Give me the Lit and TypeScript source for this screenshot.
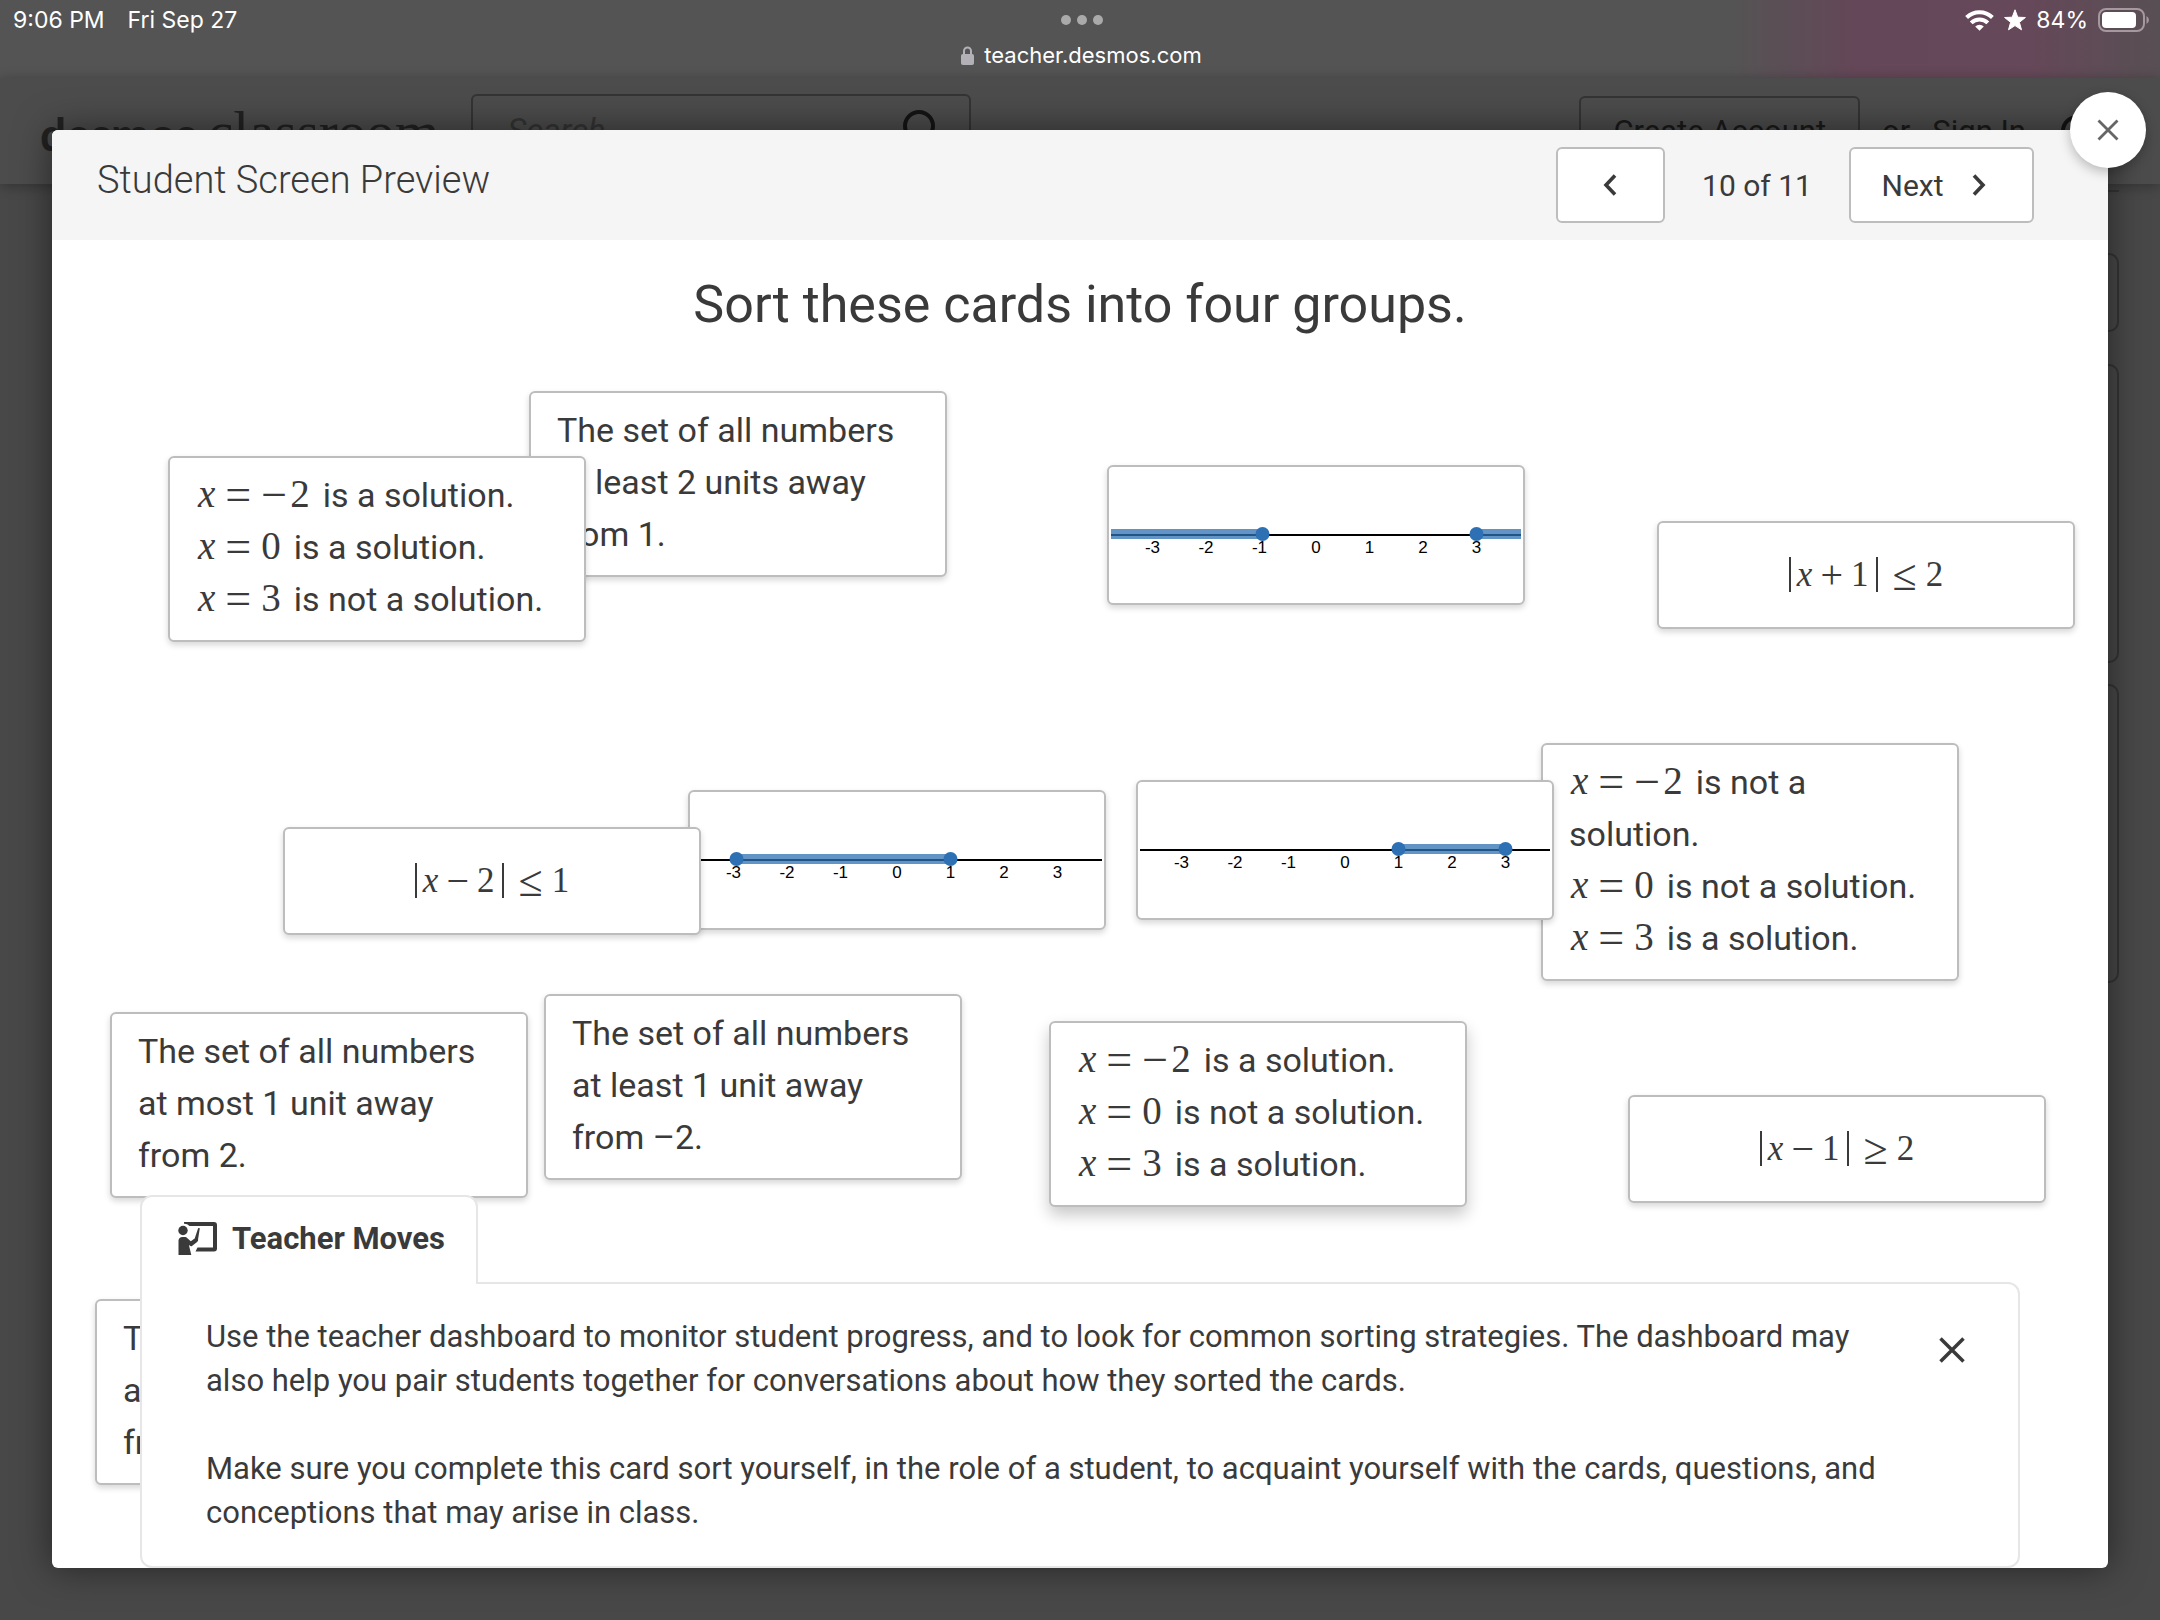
import { LitElement, html, svg, css, nothing, TemplateResult } from "lit";
import { customElement, property } from "lit/decorators.js";
import { classMap } from "lit/directives/class-map.js";

interface SortCard {
  x: number;
  y: number;
  body: TemplateResult;
  kind?: "text" | "formula" | "line";
  lifted?: boolean;
}

interface Span {
  from: number;
  to: number;
}

/** A number line from -3 to 3 with shaded spans and closed end points. */
@customElement("number-line")
export class NumberLine extends LitElement {
  @property({ attribute: false }) spans: Span[] = [];

  static styles = css`
    :host {
      display: block;
    }
    svg {
      display: block;
      width: 100%;
    }
    .axis {
      stroke: #000;
      stroke-width: 2;
    }
    .band {
      fill: #2d70b3;
      fill-opacity: 0.75;
    }
    .point {
      fill: #2d70b3;
    }
    .tick {
      font: 17px "Liberation Sans", Arial, sans-serif;
      fill: #000;
      text-anchor: middle;
    }
  `;

  private place(n: number): number {
    return Math.max(0, Math.min(410, 205 + n * 53.5));
  }

  render() {
    const ticks = [-3, -2, -1, 0, 1, 2, 3];
    const ends = this.spans
      .flatMap((s) => [s.from, s.to])
      .filter((n) => Math.abs(n) < 4);
    return html`<svg viewBox="0 0 410 132" role="img" aria-label="Number line">
      <line class="axis" x1="0" x2="410" y1="66" y2="66"></line>
      ${ticks.map(
        (n) =>
          svg`<text class="tick" x=${this.place(n) - (n < 0 ? 3 : 0)} y="84">${n}</text>`
      )}
      ${this.spans.map(
        (s) =>
          svg`<rect class="band" x=${this.place(s.from)} y="60" width=${
            this.place(s.to) - this.place(s.from)
          } height="10"></rect>`
      )}
      ${ends.map(
        (n) => svg`<circle class="point" cx=${this.place(n)} cy="65" r="7"></circle>`
      )}
    </svg>`;
  }
}

const equation = (value: string, rest: string) => html`<p class="row">
  <span class="math"
    ><i>x</i><span class="rel">=</span>${value.startsWith("−")
      ? html`<span class="neg">−</span>`
      : nothing}${value.replace("−", "")}</span
  >${rest}
</p>`;

const inequality = (op: string, n: string, rel: string, bound: string) =>
  html`<span class="math small"
    ><span class="abs"><i>x</i><span class="bin">${op}</span>${n}</span
    ><span class="cmp">${rel}</span>${bound}</span
  >`;

const line = (spans: Span[]) => html`<number-line .spans=${spans}></number-line>`;

/* Card positions are free coordinates on the sorting canvas. */
const CARDS: SortCard[] = [
  { x: 477, y: 151, body: html`The set of all numbers at least 2 units away from 1.` },
  {
    x: 116,
    y: 216,
    body: html`${equation("−2", "is a solution.")}${equation("0", "is a solution.")}${equation("3", "is not a solution.")}`,
  },
  { x: 1055, y: 225, kind: "line", body: line([{ from: -9, to: -1 }, { from: 3, to: 9 }]) },
  { x: 1605, y: 281, kind: "formula", body: inequality("+", "1", "≤", "2") },
  { x: 636, y: 550, kind: "line", body: line([{ from: -3, to: 1 }]) },
  { x: 231, y: 587, kind: "formula", body: inequality("−", "2", "≤", "1") },
  {
    x: 1489,
    y: 503,
    body: html`${equation("−2", "is not a solution.")}${equation("0", "is not a solution.")}${equation("3", "is a solution.")}`,
  },
  { x: 1084, y: 540, kind: "line", body: line([{ from: 1, to: 3 }]) },
  { x: 58, y: 772, body: html`The set of all numbers at most 1 unit away from 2.` },
  { x: 492, y: 754, body: html`The set of all numbers at least 1 unit away from –2.` },
  {
    x: 997,
    y: 781,
    lifted: true,
    body: html`${equation("−2", "is a solution.")}${equation("0", "is not a solution.")}${equation("3", "is a solution.")}`,
  },
  { x: 1576, y: 855, kind: "formula", body: inequality("−", "1", "≥", "2") },
  { x: 43, y: 1059, body: html`The set of all numbers at most 2 units away from –1.` },
];

@customElement("app-root")
export class AppRoot extends LitElement {
  static styles = css`
    :host {
      display: block;
      font-family: Roboto, "Liberation Sans", sans-serif;
      color: #3a3a3a;
    }
    * {
      box-sizing: border-box;
    }
    p,
    h1,
    h2 {
      margin: 0;
      font-weight: 400;
    }
    button {
      font: inherit;
      color: inherit;
      cursor: pointer;
    }
    svg {
      display: block;
      flex: none;
    }
    .screen {
      display: flex;
      flex-direction: column;
      min-height: 100vh;
      background: #484848;
    }

    /* Browser chrome */
    .chrome {
      height: 78px;
      padding: 0 10px 0 13px;
      font: 23px/40px Inter, "Liberation Sans", sans-serif;
      color: #fff;
      background: linear-gradient(
          90deg,
          transparent 80%,
          #644758 86%,
          #654859 94%,
          #5a4e54 99%,
          #574f53
        ),
        #545454;
    }
    .status {
      display: grid;
      grid-template-columns: 1fr auto 1fr;
      align-items: center;
      height: 40px;
    }
    .when {
      display: flex;
      gap: 23px;
    }
    .power {
      display: flex;
      justify-content: flex-end;
      align-items: center;
      gap: 10px;
    }
    .url {
      display: flex;
      justify-content: center;
      align-items: center;
      gap: 10px;
      font-size: 22px;
      line-height: 30px;
    }

    /* Page and dialog share one cell so the dialog lies over the page */
    .stack {
      flex: 1;
      display: grid;
    }
    .page,
    .dialog {
      grid-area: 1 / 1;
      min-width: 0;
    }
    .nav {
      display: flex;
      align-items: center;
      height: 106px;
      padding: 0 40px;
      background: #4c4c4c;
      box-shadow: 0 2px 12px rgba(0, 0, 0, 0.3);
      color: #1a1a1a;
    }
    .logo {
      display: flex;
      align-items: baseline;
      gap: 12px;
      color: #222;
      font: 57px/1 "Liberation Serif", serif;
      text-decoration: none;
    }
    .logo b {
      font: 700 46px/1 Lato, sans-serif;
    }
    .search {
      display: flex;
      align-items: center;
      width: 500px;
      height: 74px;
      margin-left: 32px;
      padding: 0 32px 0 34px;
      border: 2px solid #343434;
      border-radius: 6px;
    }
    .search input {
      flex: 1;
      min-width: 0;
      border: 0;
      background: none;
      font: italic 33px/40px Roboto, sans-serif;
      padding: 0;
    }
    .search input::placeholder {
      color: #343434;
      opacity: 1;
    }
    .account {
      display: flex;
      align-items: center;
      gap: 22px;
      margin-left: auto;
      font-size: 31px;
    }
    .account button {
      height: 70px;
      padding: 0 32px;
      border: 2px solid #343434;
      border-radius: 6px;
      background: none;
    }
    .account a {
      color: inherit;
      text-decoration: none;
    }
    .panels {
      display: flex;
      flex-direction: column;
      padding: 6px 41px 0 60px;
    }
    .rule {
      border-bottom: 2px solid #343434;
      height: 2px;
      margin-bottom: 61px;
    }
    .panel {
      border: 2px solid #343434;
      border-radius: 10px;
      height: 299px;
      margin-bottom: 21px;
    }
    .panel.short {
      height: 79px;
      margin-bottom: 32px;
    }

    .dialog {
      position: relative;
      display: flex;
      flex-direction: column;
      margin: 52px;
      border-radius: 6px;
      background: #fff;
      box-shadow: 0 0 36px rgba(0, 0, 0, 0.5);
    }
    .dismiss {
      position: absolute;
      top: -38px;
      right: -38px;
      display: grid;
      place-items: center;
      width: 76px;
      height: 76px;
      border: 0;
      border-radius: 50%;
      background: #fff;
      box-shadow: 0 4px 12px rgba(0, 0, 0, 0.25);
    }
    .bar {
      display: flex;
      align-items: center;
      justify-content: space-between;
      height: 110px;
      padding: 0 74px 0 45px;
      border-radius: 6px 6px 0 0;
      background: #f5f5f5;
    }
    .bar h1 {
      font-size: 38px;
      line-height: 44px;
      font-weight: 300;
      padding-bottom: 10px;
    }
    .pager {
      display: flex;
      align-items: center;
      font-size: 30px;
    }
    .count {
      width: 184px;
      text-align: center;
    }
    .step {
      display: flex;
      align-items: center;
      justify-content: center;
      gap: 28px;
      width: 109px;
      height: 76px;
      padding: 0 2px 0 0;
      border: 2px solid #bdbdbd;
      border-radius: 6px;
      background: #fff;
    }
    .step.wide {
      width: 185px;
      padding-right: 16px;
    }

    /* Sorting canvas */
    .canvas {
      position: relative;
      flex: 1;
      overflow: hidden;
      border-radius: 0 0 6px 6px;
    }
    .prompt {
      padding-top: 33px;
      text-align: center;
      font-size: 52px;
      line-height: 64px;
    }
    .card {
      position: absolute;
      width: 418px;
      padding: 11px 24px 15px 26px;
      border: 2px solid #bdbdbd;
      border-radius: 6px;
      background: #fff;
      box-shadow: 0 3px 6px rgba(0, 0, 0, 0.16);
      font-size: 34px;
      line-height: 52px;
    }
    .card.lifted {
      box-shadow: 0 8px 16px rgba(0, 0, 0, 0.22);
    }
    .card.line {
      padding: 2px;
    }
    .card.formula {
      padding: 25px 24px 27px;
      text-align: center;
    }
    .row {
      height: 52px;
      white-space: nowrap;
    }
    .row {
      height: auto;
      white-space: normal;
    }
    .math {
      margin: 0 13px 0 2px;
      font: 39px/1 "Liberation Serif", serif;
      white-space: nowrap;
    }
    .math.small {
      margin: 0;
      font-size: 35px;
    }
    .rel,
    .neg {
      font-size: 46px;
      line-height: 0;
      vertical-align: -3px;
    }
    .rel {
      margin: 0 10px;
    }
    .neg {
      margin-right: 3px;
    }
    .abs {
      display: inline-block;
      padding: 0 8px 0 6px;
      border: solid #3a3a3a;
      border-width: 0 2px;
    }
    .bin {
      margin: 0 8px;
      font-size: 40px;
      line-height: 0;
      vertical-align: -2px;
    }
    .cmp {
      margin: 0 9px 0 14px;
      font-size: 44px;
      line-height: 0;
      vertical-align: -4px;
    }

    /* Teacher notes over the canvas */
    .notes {
      position: absolute;
      left: 88px;
      right: 88px;
      bottom: 0;
    }
    .tab {
      position: relative;
      z-index: 1;
      display: flex;
      align-items: center;
      gap: 15px;
      width: 338px;
      height: 89px;
      margin-bottom: -2px;
      padding: 0 0 4px 36px;
      border: 2px solid #e6e6e6;
      border-bottom: 0;
      border-radius: 12px 12px 0 0;
      background: #fff;
      font-size: 31px;
      font-weight: 700;
    }
    .sheet {
      display: flex;
      align-items: flex-start;
      gap: 40px;
      padding: 31px 49px 31px 64px;
      border: 2px solid #e6e6e6;
      border-radius: 0 12px 12px 12px;
      background: #fff;
    }
    .copy {
      flex: 1;
      display: grid;
      gap: 44px;
      font-size: 31px;
      line-height: 44px;
    }
    .close {
      padding: 22px 4px;
      border: 0;
      background: none;
    }
  `;

  private chrome() {
    return html`<header class="chrome">
      <div class="status">
        <div class="when"><span>9:06 PM</span><span>Fri Sep 27</span></div>
        <svg width="42" height="10" fill="#aaa" aria-hidden="true">
          <circle cx="5" cy="5" r="5"></circle>
          <circle cx="21" cy="5" r="5"></circle>
          <circle cx="37" cy="5" r="5"></circle>
        </svg>
        <div class="power">
          <svg width="29" height="21" viewBox="0 0 29 21" aria-hidden="true">
            <g fill="none" stroke="#fff" stroke-width="4">
              <path d="M1.600 7.500a18.300 18.300 0 0 1 25.800 0"></path>
              <path d="M6.200 12.900a11.800 11.800 0 0 1 16.600 0"></path>
            </g>
            <path fill="#fff" d="M14.500 20.800l-4.300-4.400a6.200 6.200 0 0 1 8.600 0z"></path>
          </svg>
          <svg width="22" height="22" viewBox="0 0 22 22" aria-hidden="true">
            <path
              fill="#fff"
              stroke="#fff"
              stroke-linejoin="round"
              d="M11 .8l2.800 7.400 7.600.3-6 4.800 2.100 7.500L11 16.600l-6.500 4.200 2.100-7.500-6-4.800 7.600-.3z"
            ></path>
          </svg>
          <span>84%</span>
          <svg width="52" height="24" viewBox="0 0 52 24" aria-hidden="true">
            <rect x="1" y="1" width="45" height="22" rx="7" fill="none" stroke="#a5989f" stroke-width="2"></rect>
            <rect x="4" y="4" width="34" height="16" rx="4" fill="#fff"></rect>
            <path d="M48.500 8a4.500 4.500 0 0 1 0 8z" fill="#a5989f"></path>
          </svg>
        </div>
      </div>
      <div class="url">
        <svg width="13" height="19" viewBox="0 0 13 19" aria-hidden="true">
          <rect y="8" width="13" height="11" rx="2" fill="#b4b0b8"></rect>
          <path d="M3 9V5a3.500 3.500 0 0 1 7 0v4" fill="none" stroke="#b4b0b8" stroke-width="2"></path>
        </svg>
        <span>teacher.desmos.com</span>
      </div>
    </header>`;
  }

  private page() {
    return html`<div class="page" inert>
      <nav class="nav">
        <a class="logo" href="#"><b>desmos</b>classroom</a>
        <div class="search">
          <input type="search" placeholder="Search" aria-label="Search" />
          <svg width="36" height="42" viewBox="0 0 36 42" fill="none" stroke="#141414" stroke-width="4">
            <circle cx="18" cy="16" r="14"></circle>
            <path d="M27 28l8 11"></path>
          </svg>
        </div>
        <div class="account">
          <button>Create Account</button>
          <span>or</span>
          <a href="#">Sign In</a>
          <svg width="72" height="32" viewBox="0 0 72 32" fill="none" stroke="#141414" stroke-width="4">
            <circle cx="29" cy="16" r="14"></circle>
          </svg>
        </div>
      </nav>
      <div class="panels">
        <div class="rule"></div>
        <div class="panel short"></div>
        <div class="panel"></div>
        <div class="panel"></div>
      </div>
    </div>`;
  }

  private notes() {
    return html`<section class="notes">
      <h2 class="tab">
        <svg width="39" height="33" viewBox="0 0 39 33" fill="#3a3a3a" aria-hidden="true">
          <path d="M6 0h30a3 3 0 0 1 3 3v23.500a3 3 0 0 1-3 3H17.500l2-4H35V4H11.500A7 7 0 0 0 6 1.800z"></path>
          <circle cx="5" cy="8.500" r="4.700"></circle>
          <path d="M.5 18.500a4 4 0 0 1 4-3.500h2.600a3 3 0 0 1 2 .9l3.700 3.300 3.900-2.600L20.200 6l1.600.3-1.700 10.700a3.200 3.200 0 0 1-1 3.100l-4.800 3.600a2 2 0 0 1-2.600-.1l-.8-.6L13.300 33H.5z"></path>
        </svg>
        Teacher Moves
      </h2>
      <div class="sheet">
        <div class="copy">
          <p>
            Use the teacher dashboard to monitor student progress, and to look for common sorting
            strategies. The dashboard may also help you pair students together for conversations
            about how they sorted the cards.
          </p>
          <p>
            Make sure you complete this card sort yourself, in the role of a student, to acquaint
            yourself with the cards, questions, and conceptions that may arise in class.
          </p>
        </div>
        <button class="close" aria-label="Close teacher moves">
          <svg width="26" height="26" viewBox="0 0 26 26" stroke="#3a3a3a" stroke-width="3.500">
            <path d="M1.500 1.500l23 23M24.500 1.500l-23 23"></path>
          </svg>
        </button>
      </div>
    </section>`;
  }

  render() {
    return html`<div class="screen">
      ${this.chrome()}
      <div class="stack">
        ${this.page()}
        <main class="dialog" role="dialog" aria-label="Student Screen Preview">
          <header class="bar">
            <h1>Student Screen Preview</h1>
            <div class="pager">
              <button class="step" aria-label="Previous">
                <svg width="14" height="22" viewBox="0 0 14 22" fill="none" stroke="#3a3a3a" stroke-width="3.600">
                  <path d="M12 1.500L3 11l9 9.500"></path>
                </svg>
              </button>
              <span class="count">10 of 11</span>
              <button class="step wide">
                Next
                <svg width="14" height="22" viewBox="0 0 14 22" fill="none" stroke="#3a3a3a" stroke-width="3.600">
                  <path d="M2 1.500L11 11l-9 9.500"></path>
                </svg>
              </button>
            </div>
          </header>
          <section class="canvas">
            <h2 class="prompt">Sort these cards into four groups.</h2>
            ${CARDS.map(
              (c) => html`<div
                class=${classMap({
                  card: true,
                  line: c.kind === "line",
                  formula: c.kind === "formula",
                  lifted: !!c.lifted,
                })}
                style="left:${c.x}px;top:${c.y}px"
              >
                ${c.body}
              </div>`
            )}
            ${this.notes()}
          </section>
          <button class="dismiss" aria-label="Close">
            <svg width="22" height="22" viewBox="0 0 22 22" stroke="#666" stroke-width="2.800">
              <path d="M1.500 1.500l19 19M20.500 1.500l-19 19"></path>
            </svg>
          </button>
        </main>
      </div>
    </div>`;
  }
}
